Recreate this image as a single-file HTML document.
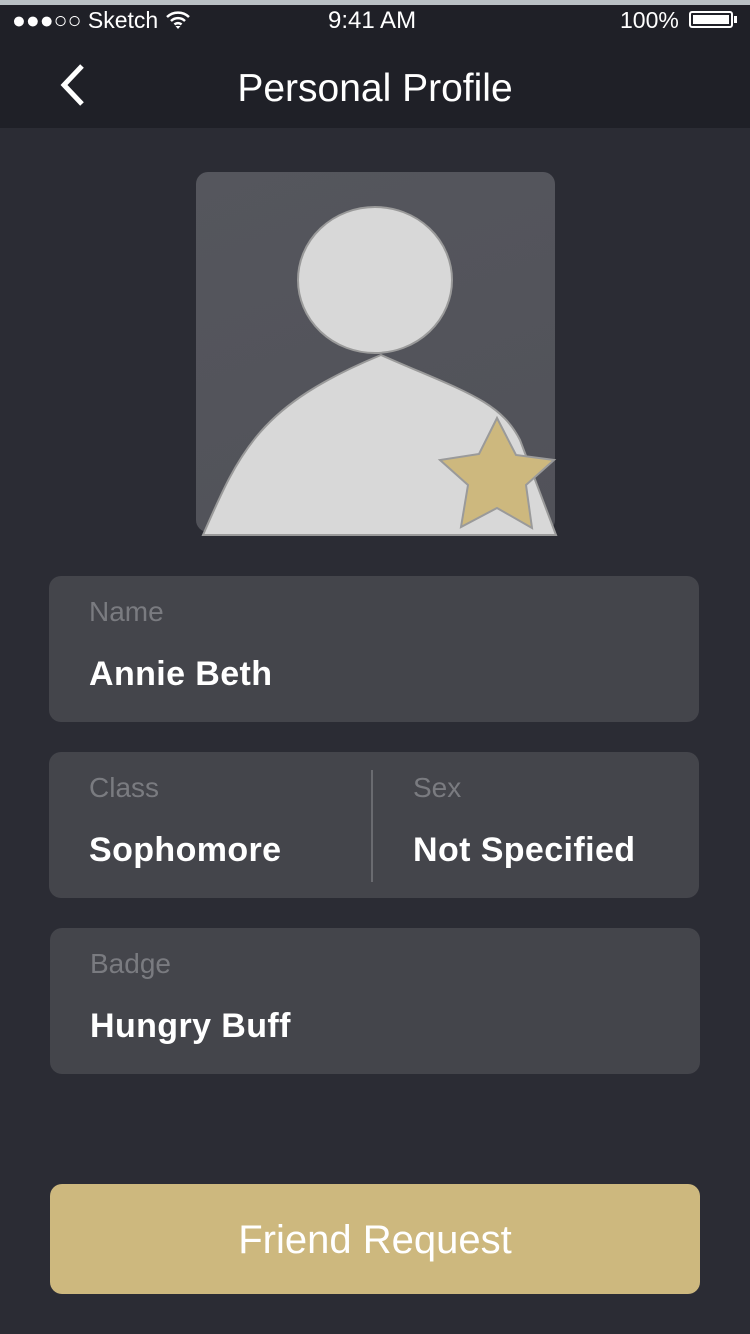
<!DOCTYPE html>
<html><head><style>
body{margin:0;width:750px;height:1334px;overflow:hidden;background:#2b2c34;font-family:"Liberation Sans",sans-serif;position:relative}
.top{position:absolute;left:0;top:0;width:750px;height:5px;background:#b9c0c4}
.nav{position:absolute;left:0;top:5px;width:750px;height:123px;background:#1f2027}
.sb{position:absolute;top:7px;font-size:23px;color:#fff}
.title{position:absolute;top:67px;width:750px;text-align:center;color:#fff;font-size:39px}
.card{position:absolute;left:49px;width:650px;height:146px;background:#44454b;border-radius:12px}
.lbl{position:absolute;top:20px;font-size:28px;color:#7a7b80}
.val{position:absolute;top:79px;font-size:34px;color:#fff;font-weight:bold;letter-spacing:0.4px}
.btn{position:absolute;left:50px;top:1184px;width:650px;height:110px;background:#cdb87e;border-radius:12px;color:#fff;font-size:40px;text-align:center;line-height:112px}
</style></head><body>
<div class="top"></div>
<div class="nav"></div>
<div class="sb" style="left:12px">●●●○○ Sketch
<svg width="26" height="20" viewBox="0 0 26 20" style="vertical-align:-2px"><path d="M2 7a16 16 0 0 1 22 0M6 11a10 10 0 0 1 14 0M9.5 14.5a5 5 0 0 1 7 0" stroke="#fff" stroke-width="2.5" fill="none"/><path d="M13 19l-2.5-3h5z" fill="#fff"/></svg></div>
<div class="sb" style="left:328px;font-size:24px">9:41 AM</div>
<div class="sb" style="left:620px">100%</div>
<div style="position:absolute;left:689px;top:11px;width:44px;height:17px;border:2px solid #fff;border-radius:3px;box-sizing:border-box;padding:2px"><div style="background:#fff;width:100%;height:100%"></div></div>
<div style="position:absolute;left:734px;top:16px;width:3px;height:7px;background:#fff"></div>
<svg style="position:absolute;left:55px;top:62px" width="34" height="46"><path d="M27 4L9 23l18 19" stroke="#fff" stroke-width="5" fill="none"/></svg>
<div class="title">Personal Profile</div>
<div style="position:absolute;left:196px;top:172px;width:359px;height:360px;background:linear-gradient(160deg,#55565d,#515259);border-radius:12px"></div>
<svg style="position:absolute;left:0;top:0" width="750" height="560">
<ellipse cx="375" cy="280" rx="77" ry="73" fill="#d8d8d8" stroke="#9a9a9a" stroke-width="2"/>
<path d="M203 535C240 450 260 405 381 355C460 390 500 400 520 440L556 535Z" fill="#d8d8d8" stroke="#9a9a9a" stroke-width="2"/>
<path d="M497 418L516 455L554 460L526 485L532 528L497 508L461 527L468 485L440 460L479 454Z" fill="#cdb87e" stroke="#9a9a9a" stroke-width="2"/>
</svg>
<div class="card" style="top:576px"><div class="lbl" style="left:40px">Name</div><div class="val" style="left:40px">Annie Beth</div></div>
<div class="card" style="top:752px"><div class="lbl" style="left:40px">Class</div><div class="val" style="left:40px">Sophomore</div>
<div style="position:absolute;left:322px;top:18px;width:2px;height:112px;background:#6a6b70"></div>
<div class="lbl" style="left:364px">Sex</div><div class="val" style="left:364px">Not Specified</div></div>
<div class="card" style="top:928px;left:50px"><div class="lbl" style="left:40px">Badge</div><div class="val" style="left:40px">Hungry Buff</div></div>
<div class="btn">Friend Request</div>
</body></html>
